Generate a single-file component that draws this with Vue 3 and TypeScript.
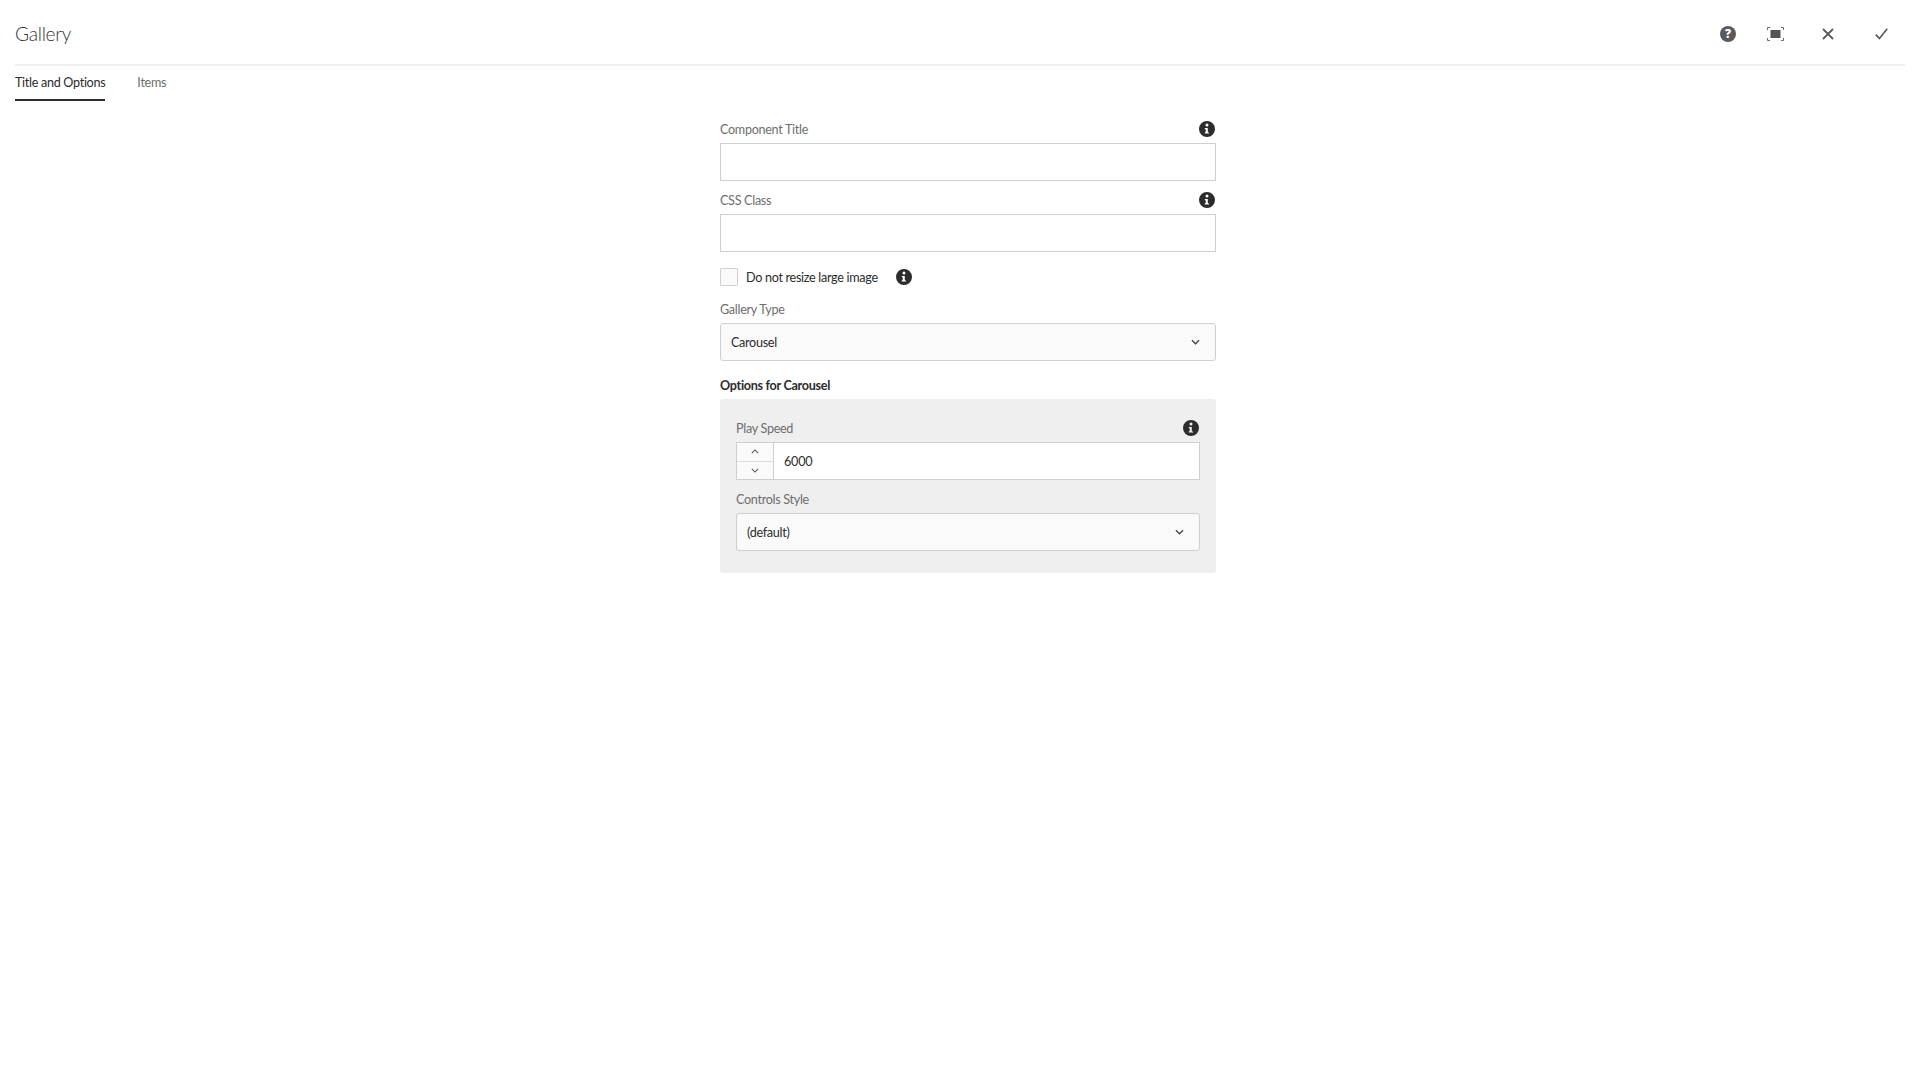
<script setup lang="ts">
const infoPath = 'M8 0a8 8 0 1 0 0 16A8 8 0 0 0 8 0Zm0 2.6a1.5 1.5 0 1 1 0 3 1.5 1.5 0 0 1 0-3ZM10.4 12.6H5.8v-1.3h.9V8.2h-.9V6.9h3v4.4h.6Z'
</script>

<template>
  <div class="dialog">
    <header class="head">
      <h1 class="title">Gallery</h1>
      <div class="actions">
        <svg class="act help" viewBox="0 0 16 16"><path fill="#5a5a5a" d="M8 0a8 8 0 1 0 0 16A8 8 0 0 0 8 0Z"/><text x="8" y="12.2" text-anchor="middle" class="q">?</text></svg>
        <svg class="act full" viewBox="0 0 17 14"><path fill="none" stroke="#6a6a6a" stroke-width="1" d="M.5 3V.5h2.5M14 .5h2.5V3M16.5 11v2.5H14M3 13.5H.5V11"/><rect x="3.5" y="3" width="10" height="8" fill="#555"/></svg>
        <svg class="act close" viewBox="0 0 12 12"><path fill="none" stroke="#5a5a5a" stroke-width="1.8" d="M1 1l10 10M11 1L1 11"/></svg>
        <svg class="act check" viewBox="0 0 13 12"><path fill="none" stroke="#5a5a5a" stroke-width="1.6" d="M.8 6.6l3.6 4L12.2.8"/></svg>
      </div>
    </header>
    <nav class="tabs">
      <span class="tab on">Title and Options</span>
      <span class="tab">Items</span>
    </nav>
    <main class="form">
      <div class="label-row">
        <label>Component Title</label>
        <svg class="info" viewBox="0 0 16 16"><path :d="infoPath" fill="#2c2c2c" fill-rule="evenodd"/></svg>
      </div>
      <div class="field"></div>
      <div class="label-row second">
        <label>CSS Class</label>
        <svg class="info" viewBox="0 0 16 16"><path :d="infoPath" fill="#2c2c2c" fill-rule="evenodd"/></svg>
      </div>
      <div class="field"></div>
      <div class="check-row">
        <span class="box"></span>
        <span class="check-text">Do not resize large image</span>
        <svg class="info" viewBox="0 0 16 16"><path :d="infoPath" fill="#2c2c2c" fill-rule="evenodd"/></svg>
      </div>
      <div class="label-row">
        <label>Gallery Type</label>
      </div>
      <div class="select">
        <span>Carousel</span>
        <svg class="chev" viewBox="0 0 10 6"><path fill="none" stroke="#444" stroke-width="1.4" d="M1 1l4 4 4-4"/></svg>
      </div>
      <div class="heading">Options for Carousel</div>
      <section class="panel">
        <div class="label-row">
          <label>Play Speed</label>
          <svg class="info" viewBox="0 0 16 16"><path :d="infoPath" fill="#2c2c2c" fill-rule="evenodd"/></svg>
        </div>
        <div class="number">
          <div class="stepper">
            <span class="step"><svg class="chev small" viewBox="0 0 10 6"><path fill="none" stroke="#555" stroke-width="1.3" d="M1 5l4-4 4 4"/></svg></span>
            <span class="step"><svg class="chev small" viewBox="0 0 10 6"><path fill="none" stroke="#555" stroke-width="1.3" d="M1 1l4 4 4-4"/></svg></span>
          </div>
          <span class="value">6000</span>
        </div>
        <div class="label-row second">
          <label>Controls Style</label>
        </div>
        <div class="select">
          <span>(default)</span>
          <svg class="chev" viewBox="0 0 10 6"><path fill="none" stroke="#444" stroke-width="1.4" d="M1 1l4 4 4-4"/></svg>
        </div>
      </section>
    </main>
  </div>
</template>

<style>
html, body { margin: 0; background: #fff; }
</style>

<style scoped>
.dialog {
  width: 1920px;
  height: 1080px;
  box-sizing: border-box;
  padding: 0 15px;
  background: #fff;
  font-family: Lato, "Liberation Sans", sans-serif;
  font-size: 12.6px;
  letter-spacing: -0.3px;
  color: #2c2c2c;
  overflow: hidden;
}
.head {
  height: 60px;
  padding-top: 4px;
  display: flex;
  align-items: center;
  justify-content: space-between;
  border-bottom: 2px solid #efefef;
}
.title {
  margin: 0 0 2px;
  font-size: 19.2px;
  font-weight: 300;
  letter-spacing: -0.3px;
  color: #333;
}
.actions { display: flex; align-items: center; padding-right: 17px; }
.act { display: block; flex: none; }
.help { width: 16px; height: 16px; margin-right: 31px; }
.q { font-size: 12px; font-weight: 800; fill: #fff; font-family: "Open Sans", sans-serif; letter-spacing: 0; }
.full { width: 17px; height: 14px; margin-right: 38px; }
.close { width: 12px; height: 12px; margin-right: 41px; }
.check { width: 13px; height: 12px; }
.tabs {
  height: 35px;
  display: flex;
  gap: 32px;
}
.tab {
  height: 33px;
  line-height: 33px;
  color: #6e6e6e;
}
.tab.on {
  color: #2c2c2c;
  border-bottom: 2px solid #2c2c2c;
}
.form {
  width: 496px;
  margin-left: 705px;
  padding-top: 17px;
}
.label-row {
  display: flex;
  align-items: center;
  justify-content: space-between;
  height: 22px;
  padding-right: 1px;
  margin-bottom: 3px;
}
.label-row.second { margin-top: 8px; }
label { color: #6e6e6e; }
.info { width: 16px; height: 16px; display: block; flex: none; }
.field {
  height: 38px;
  box-sizing: border-box;
  border: 1px solid #cfcfcf;
  background: #fff;
}
.check-row {
  display: flex;
  align-items: center;
  height: 18px;
  margin: 16px 0 12px;
}
.box {
  width: 18px;
  height: 18px;
  box-sizing: border-box;
  border: 1px solid #d0d0d0;
  border-radius: 1px;
  background: #fafafa;
}
.check-text { margin-left: 8px; margin-right: 18px; color: #2c2c2c; }
.select {
  height: 38px;
  box-sizing: border-box;
  border: 1px solid #cfcfcf;
  border-radius: 3px;
  background: #fafafa;
  display: flex;
  align-items: center;
  justify-content: space-between;
  padding: 0 15px 0 10px;
}
.chev { width: 9px; height: 6px; display: block; }
.heading {
  font-weight: 700;
  letter-spacing: -0.3px;
  line-height: 16px;
  margin: 17px 0 5px;
}
.panel {
  height: 174px;
  box-sizing: border-box;
  background: #efefef;
  border-radius: 3px;
  padding: 18px 16px;
}
.number {
  height: 38px;
  box-sizing: border-box;
  border: 1px solid #cfcfcf;
  background: #fff;
  display: flex;
}
.stepper {
  width: 36px;
  display: flex;
  flex-direction: column;
  border-right: 1px solid #cfcfcf;
  background: #fafafa;
  border-radius: 3px 0 0 3px;
}
.step {
  flex: 1;
  display: flex;
  align-items: center;
  justify-content: center;
}
.step + .step { border-top: 1px solid #dcdcdc; }
.small { width: 8px; height: 5px; }
.value {
  line-height: 38px;
  padding-left: 10px;
  letter-spacing: -0.2px;
}
</style>
